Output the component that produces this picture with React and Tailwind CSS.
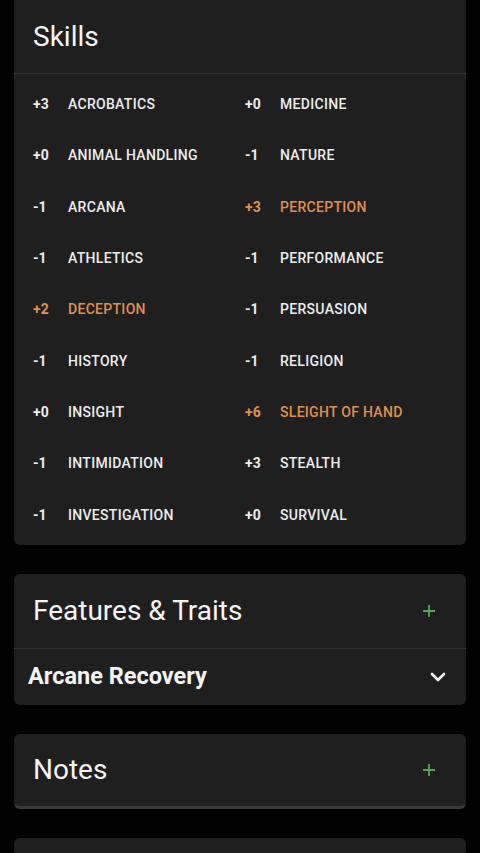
import React from 'react';

const skills = [
	{ mod: '+3', name: 'ACROBATICS' },
	{ mod: '+0', name: 'ANIMAL HANDLING' },
	{ mod: '-1', name: 'ARCANA' },
	{ mod: '-1', name: 'ATHLETICS' },
	{ mod: '+2', name: 'DECEPTION', prof: true },
	{ mod: '-1', name: 'HISTORY' },
	{ mod: '+0', name: 'INSIGHT' },
	{ mod: '-1', name: 'INTIMIDATION' },
	{ mod: '-1', name: 'INVESTIGATION' },
	{ mod: '+0', name: 'MEDICINE' },
	{ mod: '-1', name: 'NATURE' },
	{ mod: '+3', name: 'PERCEPTION', prof: true },
	{ mod: '-1', name: 'PERFORMANCE' },
	{ mod: '-1', name: 'PERSUASION' },
	{ mod: '-1', name: 'RELIGION' },
	{ mod: '+6', name: 'SLEIGHT OF HAND', prof: true },
	{ mod: '+3', name: 'STEALTH' },
	{ mod: '+0', name: 'SURVIVAL' },
];

function PlusIcon() {
	return (
		<svg width="14" height="14" viewBox="0 0 14 14" className="text-[#4caf50]">
			<path d="M7 1v12M1 7h12" stroke="currentColor" strokeWidth="1.8" fill="none" />
		</svg>
	);
}

function Chevron() {
	return (
		<svg width="16" height="10" viewBox="0 0 16 10">
			<path d="M2 2l6 6 6-6" stroke="#f2f2f2" strokeWidth="2.6" fill="none" strokeLinecap="round" strokeLinejoin="round" />
		</svg>
	);
}

function SkillRow({ skill }) {
	const color = skill.prof ? 'text-[#e0914c]' : 'text-[#ededed]';
	return (
		<div className={`h-[51.3px] flex items-center text-[14px] ${color}`}>
			<span className="w-[35px] font-bold">{skill.mod}</span>
			<span className="font-medium tracking-[0.3px]">{skill.name}</span>
		</div>
	);
}

function CardHeader({ title, plus, height = 'h-[74px]' }) {
	return (
		<div className={`${height} flex items-center justify-between pl-[19px] pr-[30px]`}>
			<h2 className="text-[28px] text-[#f4f4f4]">{title}</h2>
			{plus && <PlusIcon />}
		</div>
	);
}

export default function App() {
	return (
		<div className="min-h-[853px] bg-black px-[14px] flex flex-col gap-[29px] overflow-hidden" style={{ fontFamily: 'Roboto, "Noto Sans", sans-serif' }}>
			{/* Skills */}
			<div className="bg-[#1f1f1f] rounded-b-md">
				<div className="h-[74px] flex items-center pl-[19px] border-b border-[#333]">
					<h2 className="text-[28px] text-[#f4f4f4]">Skills</h2>
				</div>
				<div className="grid grid-cols-[212px_1fr] pl-[19px] pt-[5px] pb-[4px]">
					<div>
						{skills.slice(0, 9).map((s) => (
							<SkillRow key={s.name} skill={s} />
						))}
					</div>
					<div>
						{skills.slice(9).map((s) => (
							<SkillRow key={s.name} skill={s} />
						))}
					</div>
				</div>
			</div>

			{/* Features & Traits */}
			<div className="bg-[#1f1f1f] rounded-md">
				<div className="border-b border-[#333]">
					<CardHeader title="Features & Traits" plus />
				</div>
				<div className="h-[56px] flex items-center justify-between pl-[14px] pr-[20px]">
					<span className="text-[23.5px] font-bold text-[#f4f4f4]">Arcane Recovery</span>
					<Chevron />
				</div>
			</div>

			{/* Notes */}
			<div className="bg-[#1f1f1f] rounded-md border-b-[3px] border-[#3a3a3a]">
				<CardHeader title="Notes" plus height="h-[72px]" />
			</div>

			<div className="bg-[#1f1f1f] rounded-t-md h-[60px]"></div>
		</div>
	);
}
